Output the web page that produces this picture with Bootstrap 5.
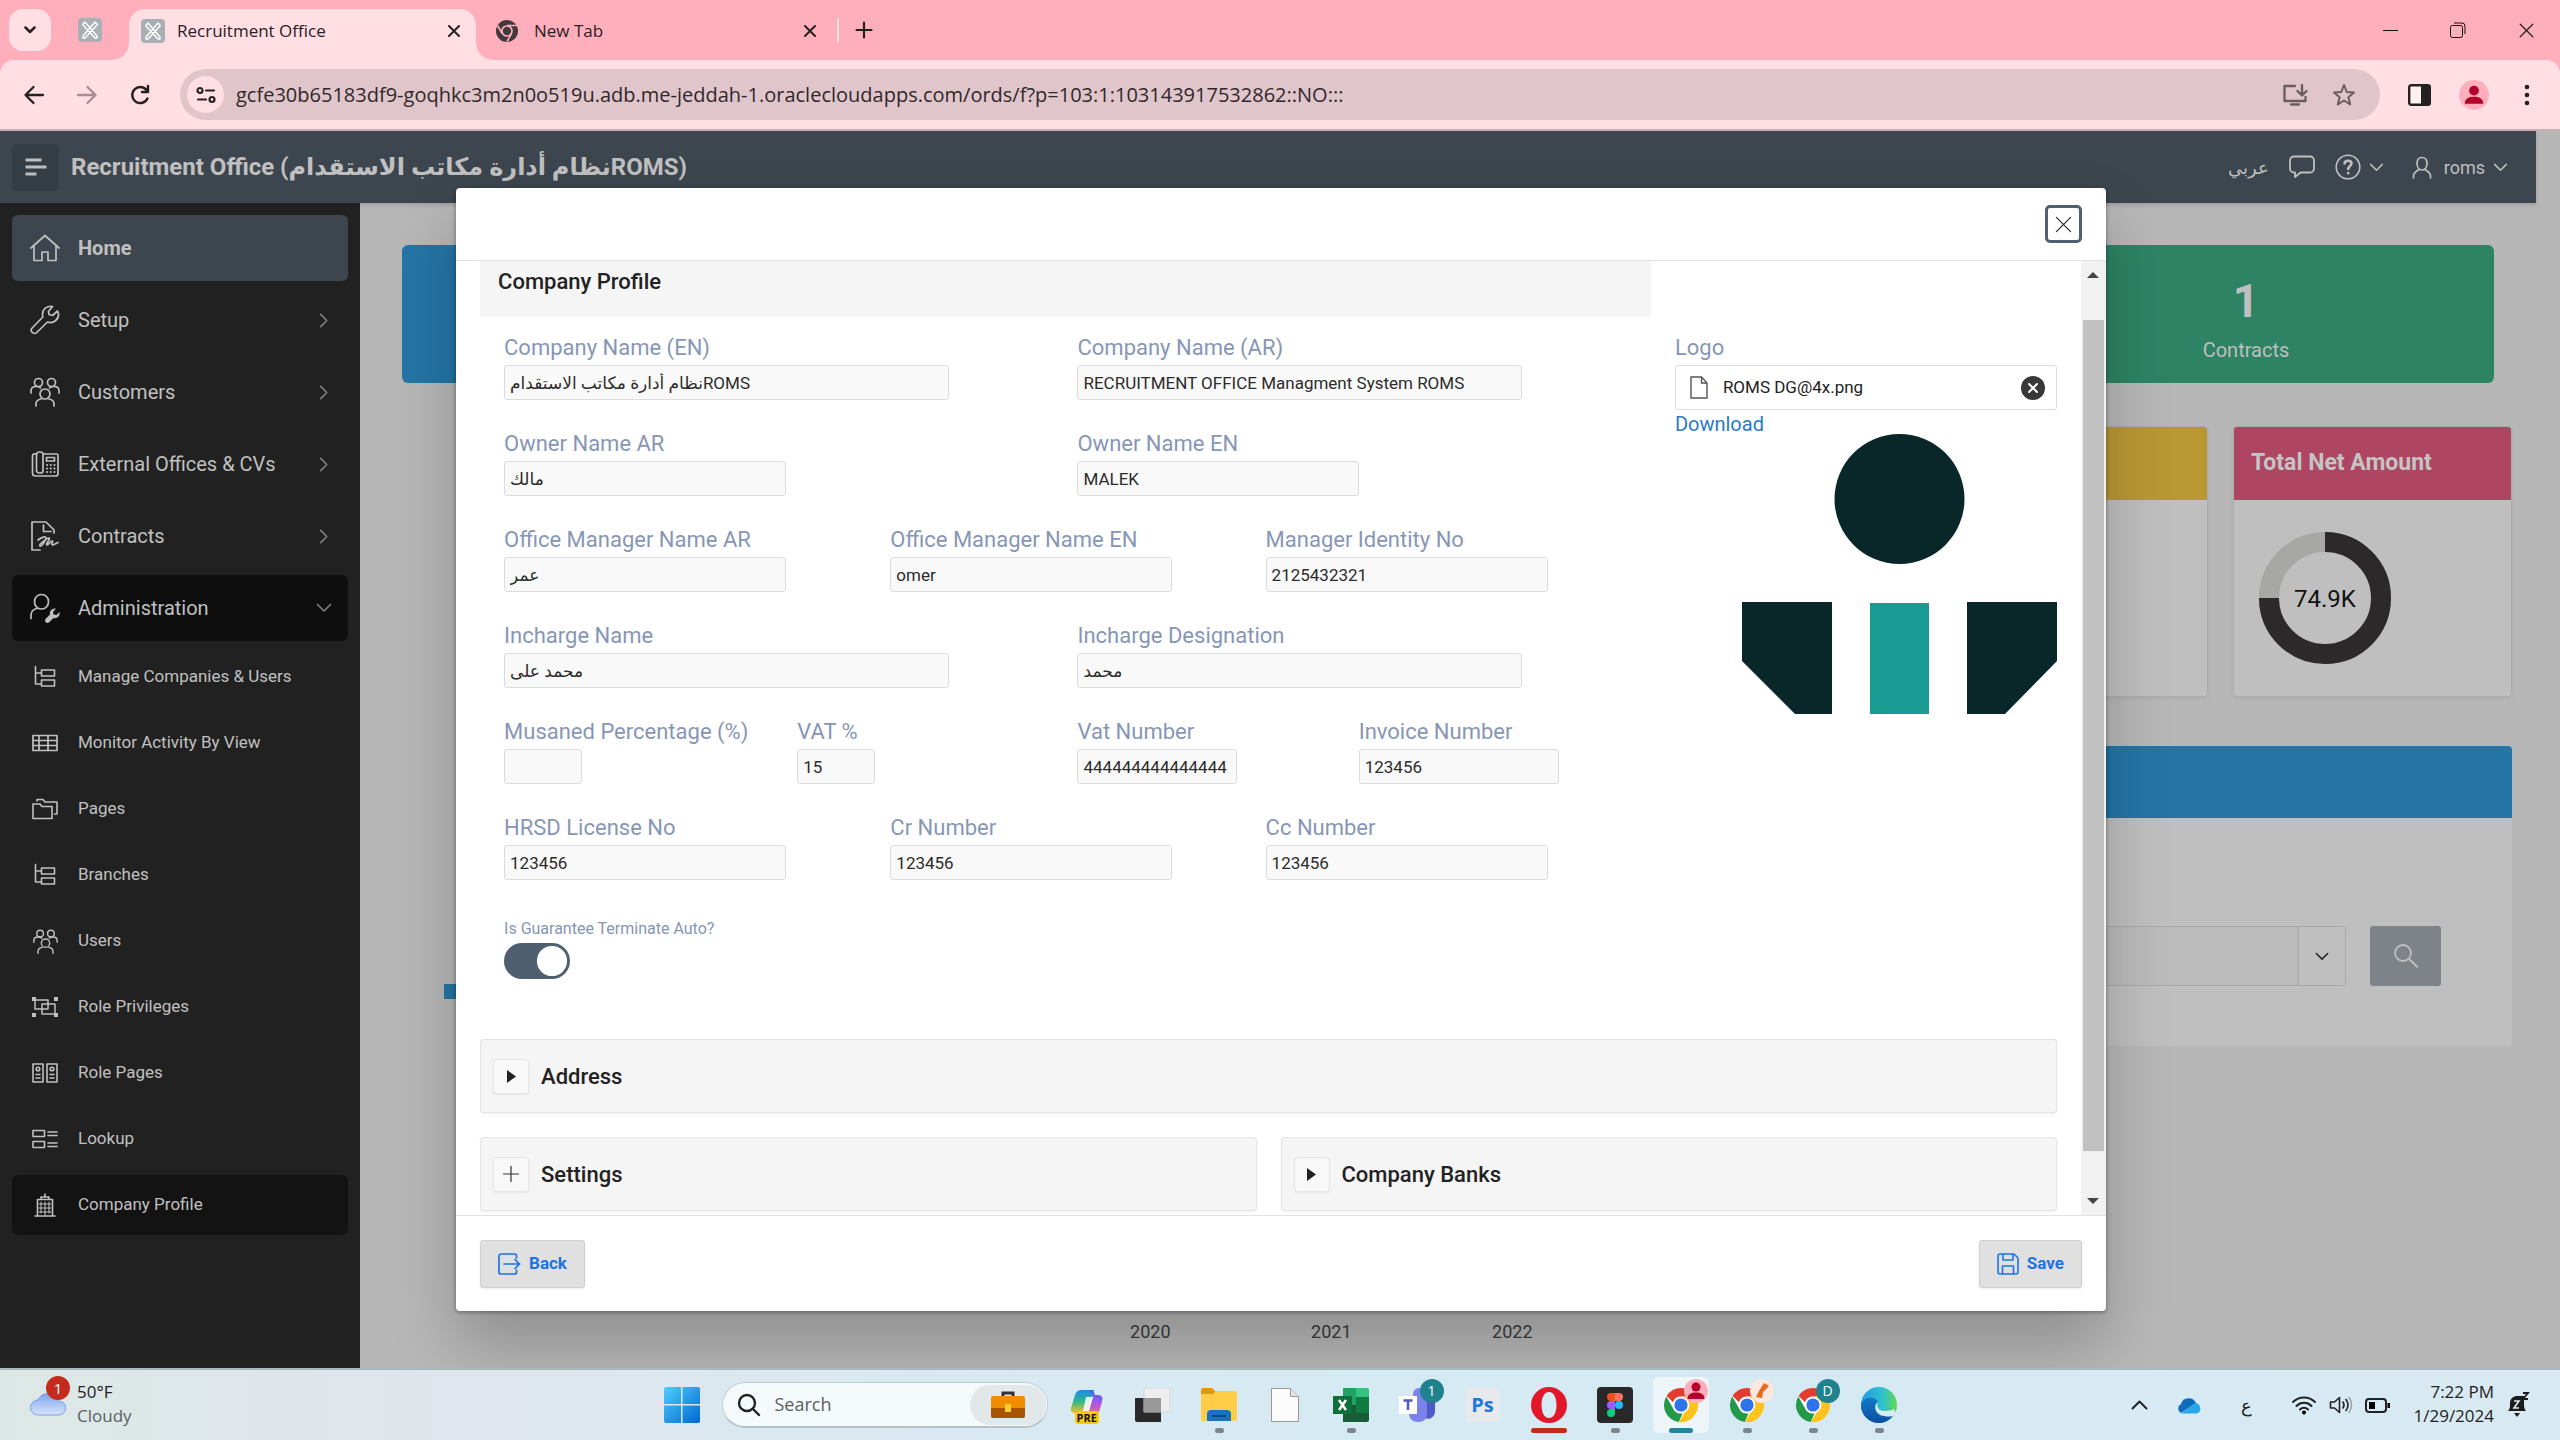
<!DOCTYPE html>
<html lang="en">
<head>
<meta charset="utf-8">
<meta name="viewport" content="width=device-width, initial-scale=1">
<title>Recruitment Office</title>
<link href="https://cdn.jsdelivr.net/npm/bootstrap@5.3.0/dist/css/bootstrap.min.css" rel="stylesheet">
<style>
body{height:100vh;min-height:1000px;overflow:hidden;font-family:Roboto,"DejaVu Sans",sans-serif;background:#b7b7b7;color:#222}
svg{display:block;flex:none}
button{border:0;background:none;padding:0;color:inherit}
.ln{fill:none;stroke:currentColor;stroke-linecap:round;stroke-linejoin:round}
.sys{font-family:"Open Sans",sans-serif}

/* browser window */
.tabstrip{background:#ffaebc;height:60px;padding-left:9px}
.tabsearch{width:42px;height:42px;border-radius:14px;background:#ffdee4}
.favi{width:24px;height:24px;border-radius:4px;background:#a9b0b4;color:#fff}
.pinned{margin-left:27px}
.tab-on,.tab-off{height:51px;padding-bottom:7px}
.tab-on{position:relative;width:347px;margin-left:27px;background:#ffdee4;border-radius:16px 16px 0 0}
.tab-on::before,.tab-on::after{content:"";position:absolute;bottom:0;width:16px;height:16px;background:radial-gradient(circle at 0 0,transparent 15px,#ffdee4 16px)}
.tab-on::before{left:-16px}
.tab-on::after{right:-16px;background:radial-gradient(circle at 100% 0,transparent 15px,#ffdee4 16px)}
.tab-off{width:352px}
.tabname{font-size:17px;color:#2b2024}
.tabsep{width:2px;height:24px;background:#ffdee4;margin-left:5px}
.winbtn{width:68px;height:60px}
.toolbar{height:71px;background:#ffdee4;border-radius:14px 14px 0 0;border-bottom:2px solid #c9aeb5;padding:0 23px;gap:31px}
.tools{gap:28px;margin-left:-3px}
.tbwrap{background:#ffaebc}
.urlbar{height:51px;border-radius:26px;background:#e0c5ca;padding:0 24px 0 7px;margin-left:-2px}
.urlbar input{font-size:20px;border:0;background:none;color:#30282b;padding:0 0 0 12px;outline:0}
.siteinfo{width:37px;height:37px;border-radius:50%;background:#ffdee4}
.avatar{width:30px;height:30px;border-radius:50%;background:#ffaebc}
.dots{width:20px}

/* application */
.app{position:relative;overflow:hidden;min-height:0}
.appbar{height:72px;margin-right:24px;padding:0 28px 0 12px;background:#3d464f;color:#bfbfbf;box-shadow:0 2px 4px rgba(0,0,0,.15);font-size:18px}
.menubtn{width:47px;height:47px;border-radius:4px;background:#353d45}
.apptitle{font-size:24px;font-weight:700;color:#c0c0c0;margin-left:12px}
.appact{gap:20px}
.side{width:360px;background:#212121;padding:12px;gap:6px;flex:none}
.side a{color:#c0c0c0;text-decoration:none;border-radius:6px;height:66px;font-size:20px;padding:0 16px 0 18px;gap:18px}
.side a.sub{height:60px;font-size:17px}
.side a .ic{width:30px;display:flex;justify-content:center}
.side a .end{color:#7e7e7e;margin-left:auto;width:16px}
.side a.cur{background:#3d464f;font-weight:700}
.side a.open{background:#0e0e0e}
.side a.here{background:#131313}
.dash{padding:42px 24px 0;margin-right:24px}
.kpis{display:grid;grid-template-columns:repeat(4,1fr);gap:36px;padding:0 18px}
.kpi{height:138px;border-radius:6px;text-align:center;color:#bfbfbf}
.kpi-blue{grid-column:1;background:#2475a6}
.kpi-green{grid-column:4;background:#2e8365;padding-top:24px}
.kpi-num{font-size:46px;line-height:64px;font-weight:700}
.kpi-cap{font-size:20px;line-height:34px}
.tiles{gap:25px;margin-top:43px}
.tile{width:279px;height:271px;border:1px solid #acacac;border-radius:4px;background:#bfbfbf;overflow:hidden;box-shadow:0 2px 4px rgba(0,0,0,.06)}
.tilehead{height:73px;padding:0 17px;font-size:23px;font-weight:700;color:#c4c4c4}
.lower{gap:24px;margin-top:49px}
.region{flex:888 1 0;height:300px;background:#bfbfbf;border-radius:4px;overflow:hidden}
.regionhead{height:72px;background:#2475a6}
.filters{gap:24px;padding:108px 71px 0 0}
.chart{flex:1216 1 0;height:600px;padding:238px 39px 0 60px}
.swatch{width:15px;height:15px;background:#2475a6}
.axis{font-size:18px;color:#3a3a3a;line-height:28px}
.axis span{width:181px;text-align:center}
.combo{height:60px;width:420px;border:1px solid #a8a8a8;background:#bbb;border-radius:3px}
.combo input{border:0;background:none}
.combo button{width:47px;border-left:1px solid #a8a8a8;background:#bfbfbf}
.findbtn{width:71px;height:60px;border-radius:3px;background:#7e8289;color:#c0c0c0}

/* dialog */
.overlay{position:absolute;inset:0;padding:57px 0 57px 2px}
.dlg{width:64.5%;background:#fff;border-radius:4px;box-shadow:0 34px 64px rgba(0,0,0,.22),0 1px 4px rgba(0,0,0,.4);overflow:hidden}
.dlghead{height:73px;border-bottom:1px solid #e2e2e2;padding:0 24px}
.dlgclose{width:37px;height:38px;border:3px solid #506070;border-radius:5px;color:#333}
.dlgbody{min-height:0;overflow:hidden}
.dlgfoot{height:96px;border-top:1px solid #e2e2e2;padding:0 24px}
.sect{font-size:22px;font-weight:500;color:#222}
.formcol{width:74.25%}
.logocol{width:25.75%;padding:71px 0 0 24px}
.formtitle{height:56px;padding:0 18px 15px;background:#f5f5f5}
.formrows{padding:15px 0 0 24px}
.formrow{display:grid;margin-bottom:28px}
.g2{grid-template-columns:1fr 1fr}
.g3{grid-template-columns:386fr 375fr 385fr}
.g4{grid-template-columns:293fr 280fr 281fr 292fr}
.flabel{display:block;font-size:22px;line-height:31px;padding-bottom:2px;color:#8796b6;white-space:nowrap}
.fbox{display:block;height:35px;border:1px solid #dcdcdc;border-radius:3px;background:#f9f9f9;font-size:17px;color:#2c2c2c;padding:0 5px}
.w-xs{width:78px}.w-s{width:160px}.w-m{width:200px}.w-l{width:282px}.w-xl{width:445px}
.switchrow{padding-top:9px}
.tlabel{display:block;font-size:16px;line-height:24px;color:#8796b6}
.tgl.form-check-input{width:66px;height:36px;margin:2px 0 0;float:none;border:0;background-color:#4f5f6f;
 background-image:url("data:image/svg+xml,%3Csvg xmlns='http://www.w3.org/2000/svg' viewBox='-4 -4 8 8'%3E%3Ccircle r='3.35' fill='%23fff'/%3E%3C/svg%3E")}
.filebox{height:45px;border:1px solid #dedede;border-radius:3px;padding:0 11px 0 14px;font-size:17px;color:#222;gap:15px}
.dl{display:block;font-size:20px;line-height:19px;margin-top:5px;color:#2a7ac6;text-decoration:none}
.acc{height:74px;border:1px solid #e4e4e4;border-radius:3px;background:#f5f5f5;padding:0 12px;gap:12px;box-shadow:0 2px 3px rgba(0,0,0,.04)}
.acc-first{margin-top:60px}
.accbtn{width:36px;height:35px;border:1px solid #e6e6e6;border-radius:3px;background:#f8f8f8;box-shadow:0 1px 2px rgba(0,0,0,.06)}
.sbar{width:25px;background:#f1f1f1;padding:11px 2px}
.thumb{background:#c1c1c1;height:831px;flex-shrink:1;margin-top:42px}
.dbtn{height:48px;border:1px solid #cfcfcf;border-radius:3px;background:#e0e0e0;color:#1a73e8;font-size:17px;font-weight:700;padding:0 17px;gap:8px;box-shadow:0 1px 3px rgba(0,0,0,.08)}

/* taskbar */
.taskbar{position:relative;height:72px;border-top:2px solid #a9b9c0;background:linear-gradient(90deg,#dce8e6,#e0e5ec 16%,#dbe8f0 30%,#d5eaf3 55%,#d8e9f2);padding:0 30px}
.tbside{flex:1 1 0;min-width:0}
.weather{font-size:17px;line-height:24px;color:#222;gap:10px}
.weather,.clock{padding-bottom:2px}
.wbadge{position:absolute;left:46px;top:6px;width:24px;height:24px;border-radius:50%;background:#c42b1c;color:#fff;font-size:15px;line-height:24px;text-align:center}
.search{width:326px;height:46px;border-radius:23px;background:#f4f9fb;border:1px solid #bdd0d8;border-bottom:2px solid #b3c3ca;padding:0 1px 0 14px;margin-right:6px}
.search input{border:0;background:none;font-size:18px;width:180px;padding:0 0 0 14px;outline:0}
.search input::placeholder{color:#5a5f62;opacity:1}
.search .case{width:76px;height:40px;border-radius:20px;background:#e2e7e9}
.apps button{position:relative;width:56px;height:56px;border-radius:6px;margin:0 5px;display:flex;align-items:center;justify-content:center}
.apps button.win{margin-right:12px}
.apps .on{background:#eef5f9}
.dot::after{content:"";position:absolute;bottom:0;left:24px;width:9px;height:5px;border-radius:3px;background:#7c868b}
.on.dot::after{left:16px;width:24px;background:#23849b}
.dot.red::after{left:10px;width:36px;background:#c42b1c}
.bdg{position:absolute;right:1px;top:2px;width:24px;height:24px;border-radius:50%;background:#21828f;color:#fff;font-size:14px;line-height:24px;text-align:center}
.bdg.tr{background:#ffaebc}
.bdg.or{background:#fbe6e0}
.ps{width:34px;height:34px;border-radius:5px;background:#e7e9ec;color:#1b7ae0;font-size:20px;font-weight:700;line-height:33px;text-align:center}
.pre{position:absolute;bottom:9px;left:16px;background:#ffc810;color:#111;font-size:11px;font-weight:700;line-height:13px;border-radius:3px;padding:0 2px}
.tray{gap:12px}
.tray .far{margin-right:27px}
.lang{font-size:18px}
.clock{font-size:17px;line-height:24px;text-align:right;color:#222;margin-left:10px}
</style>
</head>
<body class="d-flex flex-column">
<svg width="0" height="0" class="position-absolute" aria-hidden="true">
<defs>
<symbol id="x" viewBox="0 0 12 12"><path class="ln" d="M1 1l10 10M11 1L1 11"/></symbol>
<symbol id="cr" viewBox="0 0 10 16"><path class="ln" stroke-width="1.8" d="M1.500 1.500L8 8l-6.500 6.500"/></symbol>
<symbol id="cd" viewBox="0 0 16 10"><path class="ln" stroke-width="1.700" d="M1.500 1.500L8 8l6.500-6.500"/></symbol>
<symbol id="fav" viewBox="0 0 24 24"><path class="ln" stroke-width="1.400" d="M5 6l2-2 12 14v2h-2L5 7zM19 6l-2-2L5 18v2h2L19 7z"/></symbol>
<symbol id="people" viewBox="0 0 30 30"><g class="ln" stroke-width="1.700"><circle cx="8.500" cy="5.500" r="4"/><circle cx="21.500" cy="5.500" r="4"/><circle cx="15" cy="17" r="5"/><path d="M1 16v-2c0-3 2-4.500 5-4.500 2 0 3.500.5 4.500 1.500M29 16v-2c0-3-2-4.500-5-4.500-2 0-3.500.5-4.500 1.500M6 29v-2c0-3 2-4.500 5-5M24 29v-2c0-3-2-4.500-5-5"/></g></symbol>
<symbol id="tree" viewBox="0 0 24 24"><path class="ln" stroke-width="1.600" d="M2.500 1.500v17.500h6M2.500 8h6M8.500 5h13v6h-13zM8.500 15h13v6h-13z"/></symbol>
<symbol id="chrome" viewBox="0 0 36 36"><circle cx="18" cy="18" r="17" fill="#fff"/><path fill="#e33b2e" d="M18 1a17 17 0 0 1 14.700 8.500H18a8.500 8.500 0 0 0-8 5.700L3.600 9A17 17 0 0 1 18 1z"/><path fill="#229a4a" d="M3.300 9.500l7.300 12.700a8.500 8.500 0 0 0 9 4.100L15.800 35A17 17 0 0 1 3.300 9.500z"/><path fill="#fcc31e" d="M32.700 9.500A17 17 0 0 1 16 35l7.400-12.700a8.500 8.500 0 0 0-.4-9.400l-4-3.400z"/><circle cx="18" cy="18" r="8.300" fill="#fff"/><circle cx="18" cy="18" r="6.600" fill="#2f73ea"/></symbol>
<symbol id="person" viewBox="0 0 24 24"><circle cx="12" cy="8" r="4.500"/><path d="M3.500 20c0-5 4-6.500 8.500-6.500s8.500 1.500 8.500 6.500z"/></symbol>
</defs>
</svg>

<!-- browser tabs -->
<div class="tabstrip d-flex align-items-center sys">
  <button class="tabsearch d-flex align-items-center justify-content-center" aria-label="Search tabs"><svg width="12" height="8"><path class="ln" stroke-width="2.500" d="M1.500 1.500L6 6l4.500-4.500"/></svg></button>
  <button class="favi pinned" aria-label="Pinned tab"><svg width="24" height="24"><use href="#fav"/></svg></button>
  <div class="tab-on d-flex align-items-center align-self-end ps-2">
    <span class="favi ms-1"><svg width="24" height="24"><use href="#fav"/></svg></span>
    <span class="tabname flex-grow-1 ps-2 ms-1">Recruitment Office</span>
    <button class="me-3" aria-label="Close tab"><svg width="12" height="12" stroke-width="2"><use href="#x"/></svg></button>
  </div>
  <div class="tab-off d-flex align-items-center align-self-end ps-3 ms-1">
    <svg class="me-2" width="22" height="22" viewBox="0 0 22 22"><circle cx="11" cy="11" r="11" fill="#43383c"/><circle cx="11" cy="11" r="5" fill="#43383c" stroke="#ffaebc" stroke-width="1.700"/><path d="M11 5.500h10M6.200 13.500L1.500 5.500M15.600 13.500L11 21.500" stroke="#ffaebc" stroke-width="1.600"/></svg>
    <span class="tabname flex-grow-1 ps-2">New Tab</span>
    <button class="me-3" aria-label="Close tab"><svg width="12" height="12" stroke-width="2"><use href="#x"/></svg></button>
  </div>
  <span class="tabsep"></span>
  <button class="ms-3" aria-label="New tab"><svg width="18" height="18"><path class="ln" stroke-width="2.200" d="M9 1.500v15M1.500 9h15"/></svg></button>
  <div class="ms-auto d-flex">
    <button class="winbtn" aria-label="Minimize"><svg class="mx-auto" width="15" height="15"><path stroke="#111" d="M0 7.500h15"/></svg></button>
    <button class="winbtn" aria-label="Restore"><svg class="mx-auto" width="16" height="16"><rect x=".5" y="3.500" width="12" height="12" rx="2" fill="none" stroke="#111"/><path fill="none" stroke="#111" d="M4 1h8a3 3 0 0 1 3 3v8"/></svg></button>
    <button class="winbtn" aria-label="Close"><svg class="mx-auto" width="15" height="15" stroke-width="1"><use href="#x"/></svg></button>
  </div>
</div>

<!-- address bar -->
<div class="tbwrap sys">
<div class="toolbar d-flex align-items-center">
  <button aria-label="Back"><svg width="22" height="20"><path class="ln" stroke-width="2.300" d="M20 10H3M10.500 2L2.500 10l8 8"/></svg></button>
  <button aria-label="Forward" style="color:#a58d92"><svg width="22" height="20"><path class="ln" stroke-width="2.300" d="M2 10h17M11.500 2l8 8-8 8"/></svg></button>
  <button aria-label="Reload"><svg width="22" height="22"><path class="ln" stroke-width="2.400" d="M18.500 14.500A8 8 0 1 1 17.500 6M19 2v6h-6"/></svg></button>
  <div class="urlbar flex-grow-1 d-flex align-items-center">
    <button class="siteinfo d-flex align-items-center justify-content-center" aria-label="Site information"><svg width="20" height="18"><g class="ln" stroke-width="2.200"><circle cx="4" cy="4.500" r="2.500"/><path d="M10 4.500h8M2 13.500h8"/><circle cx="16" cy="13.500" r="2.500"/></g></svg></button>
    <input class="flex-grow-1" aria-label="Address" value="gcfe30b65183df9-goqhkc3m2n0o519u.adb.me-jeddah-1.oraclecloudapps.com/ords/f?p=103:1:103143917532862::NO:::">
    <button class="me-4" aria-label="Install app" style="color:#6b5c60"><svg width="26" height="22"><path class="ln" stroke-width="2.300" d="M13 2H2.500v15h21v-4M9 20.500h8M20 1v9M15.500 7l4.500 4.500L24.500 7"/></svg></button>
    <button aria-label="Bookmark" style="color:#6b5c60"><svg width="24" height="24"><path class="ln" stroke-width="2" d="M12 2l2.800 7 7.200.5-5.600 4.700 1.800 7.300-6.200-4-6.200 4 1.800-7.300L2 9.500 9.200 9z"/></svg></button>
  </div>
  <div class="tools d-flex align-items-center">
    <button aria-label="Side panel"><svg width="23" height="22"><rect x="1.200" y="1.200" width="20.600" height="19.600" rx="2" fill="#fff0f2" stroke="#222" stroke-width="2.400"/><path fill="#222" d="M13 1h9v20h-9z"/></svg></button>
    <button class="avatar d-flex align-items-center justify-content-center" aria-label="Profile"><svg width="26" height="26" fill="#b4002a"><use href="#person"/></svg></button>
    <button aria-label="Menu" class="dots"><svg class="mx-auto" width="6" height="22" fill="#222"><circle cx="3" cy="3" r="2.300"/><circle cx="3" cy="11" r="2.300"/><circle cx="3" cy="19" r="2.300"/></svg></button>
  </div>
</div>
</div>

<!-- application -->
<div class="app flex-grow-1 d-flex flex-column">
  <header class="appbar d-flex align-items-center">
    <button class="menubtn d-flex align-items-center justify-content-center" aria-label="Navigation"><svg width="24" height="18"><path class="ln" stroke-width="3" style="stroke-linecap:butt" d="M1.500 2h16M1.500 9h21M1.500 16h11"/></svg></button>
    <div class="apptitle">Recruitment Office (نظام أدارة مكاتب الاستقدامROMS)</div>
    <div class="appact d-flex align-items-center ms-auto">
      <a class="text-reset text-decoration-none" href="#">عربي</a>
      <button aria-label="Messages"><svg width="26" height="24"><path class="ln" stroke-width="1.800" d="M5 1.500h16a4 4 0 0 1 4 4v8a4 4 0 0 1-4 4h-9.500L6 22v-4.500H5a4 4 0 0 1-4-4v-8a4 4 0 0 1 4-4z"/></svg></button>
      <button class="d-flex align-items-center gap-2" aria-label="Help"><svg width="26" height="26"><circle class="ln" cx="13" cy="13" r="11.800" stroke-width="1.600"/><path class="ln" stroke-width="2.600" d="M9.500 9.500c.5-4 7-3.500 7 0 0 2.500-3.300 2.500-3.300 5.500M13.200 19v.3"/></svg><svg width="15" height="9"><use href="#cd"/></svg></button>
      <button class="d-flex align-items-center gap-2 ms-2"><svg class="me-1" width="20" height="23"><g class="ln" stroke-width="1.700"><path d="M10 1.500c3.500 0 5 2.500 5 6s-2 6.500-5 6.500-5-3-5-6.500 1.500-6 5-6zM1.500 22v-2c0-3 2-4.500 5.500-6.500M18.500 22v-2c0-3-2-4.500-5.500-6.500"/></g></svg>roms<svg width="15" height="9"><use href="#cd"/></svg></button>
    </div>
  </header>

  <div class="d-flex flex-grow-1 overflow-hidden">
    <nav class="side d-flex flex-column">
      <a class="cur d-flex align-items-center" href="#"><span class="ic"><svg width="30" height="28"><path class="ln" stroke-width="1.700" d="M1 14L15 1.500 29 14M4 12v14.500h8V18h6v8.500h8V12"/></svg></span>Home</a>
      <a class="d-flex align-items-center" href="#"><span class="ic"><svg width="30" height="30"><path class="ln" stroke-width="1.700" d="M22.500 1.500c-5-1-10 2-10 8 0 1 .2 2 .3 2.500L1.700 23.500c-1.500 2.500 1 6 4.500 4.500L17.500 17c6 2 11.500-2.500 11-8.500l-1-2.500-5 4.500-3.500-1-.5-3z"/></svg></span>Setup<svg class="end" height="15"><use href="#cr"/></svg></a>
      <a class="d-flex align-items-center" href="#"><span class="ic"><svg width="30" height="30"><use href="#people"/></svg></span>Customers<svg class="end" height="15"><use href="#cr"/></svg></a>
      <a class="d-flex align-items-center" href="#"><span class="ic"><svg width="28" height="26"><g class="ln" stroke-width="1.700"><path d="M5.500 3C3 2.500 1.500 3 1.500 5v17c0 2 1 3 3 3h20c1.500 0 2.500-1 2.500-2.500V4.500C27 3.500 26.500 3 25.500 3H12"/><rect x="5.500" y="1" width="6.500" height="21" rx="2.500"/><path d="M15.500 6.500h8V10h-8z"/><path stroke-width="2" stroke-dasharray=".1 3.600" d="M16 14h9M16 17.500h9M16 21h9"/></g></svg></span>External Offices &amp; CVs<svg class="end" height="15"><use href="#cr"/></svg></a>
      <a class="d-flex align-items-center" href="#"><span class="ic"><svg width="30" height="32"><g class="ln" stroke-width="1.700"><path d="M10 30H2V2h14l8 8v3M13.500 5v6.500H21"/><path d="M8 20c4-3 8-4 8-2s-4 9-6 8 7-8 9-8-4 7-2 7 3-4 5-4-2 4 1 4l5-2.500"/></g></svg></span>Contracts<svg class="end" height="15"><use href="#cr"/></svg></a>
      <a class="open d-flex align-items-center" href="#"><span class="ic"><svg width="30" height="30"><path class="ln" stroke-width="1.700" d="M11.500 1.500c4 0 7 3 7 7s-2.500 7.500-7 7.500-7-3.500-7-7.500 3-7 7-7zM7 15.500c-4 1-6 3-6 6.500v3.500"/><path fill="currentColor" d="M26 15.500l-3 3.500.5 2.500 3 .5 3-3c1 4-2.500 7-6 6l-4.500 4.500c-2.500 1.500-5-1-3.500-3.500l4.500-4.500c-1-3.500 2.500-6.500 6-6z"/></svg></span>Administration<svg class="end" height="10"><use href="#cd"/></svg></a>
      <a class="sub d-flex align-items-center" href="#"><span class="ic"><svg width="24" height="24"><use href="#tree"/></svg></span>Manage Companies &amp; Users</a>
      <a class="sub d-flex align-items-center" href="#"><span class="ic"><svg width="26" height="18"><path class="ln" stroke-width="1.700" d="M1 1.500h24v15H1zM1 6.500h24M1 11.500h24M7 1.500v15M16 1.500v15"/></svg></span>Monitor Activity By View</a>
      <a class="sub d-flex align-items-center" href="#"><span class="ic"><svg width="26" height="22"><path class="ln" stroke-width="1.600" d="M1 20.500V6h7l2 2.500h10v12zM5 3V1.500h6L13 4h12v12h-2.500"/></svg></span>Pages</a>
      <a class="sub d-flex align-items-center" href="#"><span class="ic"><svg width="24" height="24"><use href="#tree"/></svg></span>Branches</a>
      <a class="sub d-flex align-items-center" href="#"><span class="ic"><svg width="25" height="25"><use href="#people"/></svg></span>Users</a>
      <a class="sub d-flex align-items-center" href="#"><span class="ic"><svg width="26" height="20"><path class="ln" stroke-width="1.500" d="M3 3h13v9H3zM10 7h13v10H10z"/><path fill="currentColor" d="M0 0h4v4H0zM22 0h4v4h-4zM0 16h4v4H0zM22 16h4v4h-4z"/></svg></span>Role Privileges</a>
      <a class="sub d-flex align-items-center" href="#"><span class="ic"><svg width="26" height="20"><path class="ln" stroke-width="1.600" d="M1 1h10v18H1zM15 1h10v18H15zM4 11.500h4M4 15h4M18 11.500h4M18 15h4"/><circle class="ln" stroke-width="1.600" cx="6" cy="6" r="1.800"/><circle class="ln" stroke-width="1.600" cx="20" cy="6" r="1.800"/></svg></span>Role Pages</a>
      <a class="sub d-flex align-items-center" href="#"><span class="ic"><svg width="26" height="20"><path class="ln" stroke-width="1.600" d="M1 1.500h11.500v6H1zM1 12.500h11.500v6H1zM16 3h9M16 6.500h9M16 14h9M16 17.500h9"/></svg></span>Lookup</a>
      <a class="sub here d-flex align-items-center" href="#"><span class="ic"><svg width="22" height="24"><path class="ln" stroke-width="1.600" d="M1 23h20M3.500 23V6.500h15V23M7 6.500V4h8v2.500M11 4V1"/><path class="ln" stroke-width="1.100" d="M7 9v11M11 9v13M15 9v11M5 11h12M5 15h12M5 19h12"/></svg></span>Company Profile</a>
    </nav>

    <main class="dash flex-grow-1">
      <div class="kpis">
        <div class="kpi kpi-blue"></div>
        <div class="kpi kpi-green"><div class="kpi-num">1</div><div class="kpi-cap">Contracts</div></div>
      </div>
      <div class="tiles d-flex justify-content-end">
        <div class="tile"><div class="tilehead" style="background:#b99834"></div></div>
        <div class="tile">
          <div class="tilehead d-flex align-items-center" style="background:#ae4562">Total Net Amount</div>
          <svg width="180" height="198"><circle cx="91" cy="98" r="56" fill="none" stroke="#a7a7a5" stroke-width="20"/><circle cx="91" cy="98" r="56" fill="none" stroke="#2b292a" stroke-width="20" pathLength="100" stroke-dasharray="75 25" transform="rotate(-90 91 98)"/><text x="91" y="107" text-anchor="middle" font-size="24" fill="#111" font-family="Roboto, sans-serif">74.9K</text></svg>
        </div>
      </div>
      <div class="lower d-flex">
        <div class="chart d-flex flex-column"><div class="swatch"></div><div class="axis d-flex justify-content-end mt-auto"><span>2020</span><span>2021</span><span>2022</span></div></div>
        <div class="region">
          <div class="regionhead"></div>
          <div class="filters d-flex justify-content-end">
            <div class="combo d-flex"><input class="flex-grow-1" aria-label="Filter"><button aria-label="Open list"><svg class="mx-auto" width="14" height="9" style="color:#222"><use href="#cd"/></svg></button></div>
            <button class="findbtn" aria-label="Search"><svg class="mx-auto" width="26" height="26"><g class="ln" stroke-width="1.800"><circle cx="10" cy="10" r="8"/><path d="M16 16l8.500 8"/></g></svg></button>
          </div>
        </div>
      </div>
    </main>
  </div>

  <!-- company profile dialog -->
  <div class="overlay d-flex justify-content-center">
    <form class="dlg d-flex flex-column" role="dialog" aria-label="Company Profile">
      <div class="dlghead d-flex align-items-center justify-content-end">
        <button type="button" class="dlgclose d-flex align-items-center justify-content-center" aria-label="Close"><svg width="17" height="17" stroke-width=".9"><use href="#x"/></svg></button>
      </div>
      <div class="dlgbody d-flex flex-grow-1">
        <div class="flex-grow-1 px-4">
          <div class="d-flex">
            <div class="formcol">
              <div class="formtitle d-flex align-items-center sect">Company Profile</div>
              <div class="formrows">
                <div class="formrow g2">
                  <div><label class="flabel" for="f1">Company Name (EN)</label><input class="fbox w-xl" id="f1" value="نظام أدارة مكاتب الاستقدامROMS"></div>
                  <div><label class="flabel" for="f2">Company Name (AR)</label><input class="fbox w-xl" id="f2" value="RECRUITMENT OFFICE Managment System ROMS"></div>
                </div>
                <div class="formrow g2">
                  <div><label class="flabel" for="f3">Owner Name AR</label><input class="fbox w-l" id="f3" value="مالك"></div>
                  <div><label class="flabel" for="f4">Owner Name EN</label><input class="fbox w-l" id="f4" value="MALEK"></div>
                </div>
                <div class="formrow g3">
                  <div><label class="flabel" for="f5">Office Manager Name AR</label><input class="fbox w-l" id="f5" value="عمر"></div>
                  <div><label class="flabel" for="f6">Office Manager Name EN</label><input class="fbox w-l" id="f6" value="omer"></div>
                  <div><label class="flabel" for="f7">Manager Identity No</label><input class="fbox w-l" id="f7" value="2125432321"></div>
                </div>
                <div class="formrow g2">
                  <div><label class="flabel" for="f8">Incharge Name</label><input class="fbox w-xl" id="f8" value="محمد على"></div>
                  <div><label class="flabel" for="f9">Incharge Designation</label><input class="fbox w-xl" id="f9" value="محمد"></div>
                </div>
                <div class="formrow g4">
                  <div><label class="flabel" for="f10">Musaned Percentage (%)</label><input class="fbox w-xs" id="f10" value=""></div>
                  <div><label class="flabel" for="f11">VAT %</label><input class="fbox w-xs" id="f11" value="15"></div>
                  <div><label class="flabel" for="f12">Vat Number</label><input class="fbox w-s" id="f12" value="444444444444444"></div>
                  <div><label class="flabel" for="f13">Invoice Number</label><input class="fbox w-m" id="f13" value="123456"></div>
                </div>
                <div class="formrow g3">
                  <div><label class="flabel" for="f14">HRSD License No</label><input class="fbox w-l" id="f14" value="123456"></div>
                  <div><label class="flabel" for="f15">Cr Number</label><input class="fbox w-l" id="f15" value="123456"></div>
                  <div><label class="flabel" for="f16">Cc Number</label><input class="fbox w-l" id="f16" value="123456"></div>
                </div>
                <div class="switchrow">
                  <label class="tlabel" for="f17">Is Guarantee Terminate Auto?</label>
                  <div class="form-switch p-0"><input class="form-check-input tgl d-block" type="checkbox" role="switch" id="f17" checked></div>
                </div>
              </div>
            </div>
            <div class="logocol">
              <label class="flabel" for="logo">Logo</label>
              <div class="filebox d-flex align-items-center">
                <svg width="18" height="23"><path fill="none" stroke="#555" stroke-width="1.400" d="M1 1h10.500L17 7v15H1zM11.500 1v6H17"/></svg>
                <span class="flex-grow-1">ROMS DG@4x.png</span>
                <button type="button" id="logo" aria-label="Remove file"><svg width="24" height="24"><circle cx="12" cy="12" r="12" fill="#383838"/><path class="ln" style="stroke:#fff" stroke-width="2" d="M8 8l8 8M16 8l-8 8"/></svg></button>
              </div>
              <a class="dl" href="#">Download</a>
              <svg class="ms-auto" width="315" height="281" viewBox="0 0 315 281" role="img" aria-label="Company logo"><circle cx="157.500" cy="65" r="65" fill="#092729"/><path fill="#092729" d="M0 168h90v112H53L0 227zM225 168h90v59l-52 53h-38z"/><path fill="#1a9b93" d="M128 169h59v111h-59z"/></svg>
            </div>
          </div>
          <div class="acc acc-first d-flex align-items-center sect"><button type="button" class="accbtn d-flex align-items-center justify-content-center" aria-label="Expand Address"><svg width="9" height="13"><path fill="#222" d="M0 0l9 6.500L0 13z"/></svg></button>Address</div>
          <div class="d-flex gap-4 mt-4">
            <div class="acc d-flex align-items-center sect flex-fill w-50"><button type="button" class="accbtn d-flex align-items-center justify-content-center" aria-label="Expand Settings"><svg width="16" height="16"><path stroke="#333" stroke-width="1.200" d="M8 0v16M0 8h16"/></svg></button>Settings</div>
            <div class="acc d-flex align-items-center sect flex-fill w-50"><button type="button" class="accbtn d-flex align-items-center justify-content-center" aria-label="Expand Company Banks"><svg width="9" height="13"><path fill="#222" d="M0 0l9 6.500L0 13z"/></svg></button>Company Banks</div>
          </div>
        </div>
        <div class="sbar d-flex flex-column align-items-stretch">
          <svg class="mx-auto" width="12" height="6"><path fill="#444" d="M0 6l6-6 6 6z"/></svg>
          <div class="thumb"></div>
          <svg class="mx-auto mt-auto" width="12" height="6"><path fill="#444" d="M0 0l6 6 6-6z"/></svg>
        </div>
      </div>
      <div class="dlgfoot d-flex align-items-center justify-content-between">
        <button type="button" class="dbtn d-flex align-items-center"><svg width="23" height="22"><path class="ln" stroke-width="1.700" d="M18.500 5V3a2 2 0 0 0-2-2H3a2 2 0 0 0-2 2v16a2 2 0 0 0 2 2h13.500a2 2 0 0 0 2-2v-2M6 11h15.500M17 6.500l4.500 4.500-4.500 4.500"/></svg>Back</button>
        <button type="button" class="dbtn d-flex align-items-center"><svg width="22" height="22"><path class="ln" stroke-width="1.600" d="M3 1h14l4 4v14a2 2 0 0 1-2 2H3a2 2 0 0 1-2-2V3a2 2 0 0 1 2-2zM6 1v6h10V1M5.500 21v-8h11v8"/></svg>Save</button>
      </div>
    </form>
  </div>
</div>

<!-- taskbar -->
<div class="taskbar d-flex align-items-center sys">
  <div class="weather tbside d-flex align-items-center">
    <svg width="37" height="34"><defs><linearGradient id="cl" y2="1" x2="0"><stop stop-color="#7aa5ee"/><stop offset="1" stop-color="#d8e4fa"/></linearGradient></defs><path fill="url(#cl)" stroke="#7f9fe6" d="M8 28a7 7 0 0 1 0-15 11 11 0 0 1 20.500 1A7 7 0 0 1 29 28z"/></svg>
    <div>50°F<br><span style="color:#5b6164">Cloudy</span></div>
    <span class="wbadge">1</span>
  </div>
  <div class="apps d-flex align-items-center">
    <button class="win" aria-label="Start"><svg width="36" height="36"><defs><linearGradient id="wn" x2="1" y2="1"><stop stop-color="#4fcfff"/><stop offset="1" stop-color="#0067cf"/></linearGradient></defs><path fill="url(#wn)" d="M0 2q0-2 2-2h15v17H0zM18.500 0H34q2 0 2 2v15H18.500zM0 18.500h17V36H2q-2 0-2-2zM18.500 18.500H36V34q0 2-2 2H18.500z"/></svg></button>
    <div class="search d-flex align-items-center">
      <svg width="24" height="24"><g class="ln" stroke-width="2.400"><circle cx="10" cy="10" r="8"/><path d="M16 16l6 6"/></g></svg>
      <input type="search" class="flex-grow-1" placeholder="Search" aria-label="Search">
      <span class="case d-flex align-items-center justify-content-center"><svg width="34" height="28"><path fill="none" stroke="#333" stroke-width="3" d="M12 7V2h10v5"/><rect y="5" width="34" height="22" rx="2" fill="#f08d00"/><path fill="#a85300" d="M0 17h34v8q0 2-2 2H2q-2 0-2-2z"/><path fill="#ffd02a" d="M14 13h6v8h-6z"/></svg></span>
    </div>
    <button aria-label="Copilot"><svg width="36" height="36"><defs><linearGradient id="c1" x2="0" y2="1"><stop stop-color="#1b8af0"/><stop offset=".5" stop-color="#2fb98a"/><stop offset="1" stop-color="#f0c02a"/></linearGradient><linearGradient id="c2" x2="0" y2="1"><stop stop-color="#3568ea"/><stop offset=".5" stop-color="#b454e8"/><stop offset="1" stop-color="#f4725c"/></linearGradient></defs><path fill="url(#c1)" d="M12 3h13l-6 20q-1 3-5 3H6q-5 0-4-5l4-13q2-5 6-5z"/><path fill="url(#c2)" d="M20 3q5 0 6 5h3q6 0 4 7l-3 10q-2 6-6 6H14q4-1 5-5l5-16z"/><path fill="#fff" opacity=".85" d="M17 10h7l-4 14h-6z"/></svg><span class="pre">PRE</span></button>
    <button aria-label="Task view"><svg width="36" height="34"><path fill="#292929" d="M0 10h26v24H2q-2 0-2-2z"/><path fill="#eee" stroke="#d4d4d4" d="M9 2q0-2 2-2h22q2 0 2 2v22H9z"/><path fill="#999" d="M9 10h17v14H9z"/></svg></button>
    <button class="dot" aria-label="File Explorer"><svg width="36" height="34"><path fill="#dc9a0c" d="M0 2q0-2 2-2h9l4 4h12v8H0z"/><path fill="#ffcd48" d="M0 6h12l3-3h19q2 0 2 2v26q0 2-2 2H2q-2 0-2-2z"/><path fill="#1673bf" d="M6 33V26q0-4 4-4h16q4 0 4 4v7z"/><path stroke="#0b4a80" stroke-width="2" d="M11 28h14"/></svg></button>
    <button aria-label="Document"><svg width="28" height="34"><path fill="#fcfcfc" stroke="#999" d="M.5.500h19l8 8v25H.5z"/><path fill="#e6e6e6" stroke="#999" d="M19.500.500v8h8"/></svg></button>
    <button class="dot" aria-label="Excel"><svg width="36" height="34"><path fill="#21a366" d="M10 0h13v17H10z"/><path fill="#33c481" d="M23 0h11q2 0 2 2v7H23z"/><path fill="#107c41" d="M23 9h13v9H23z"/><path fill="#185c37" d="M10 17h13v7h13v8q0 2-2 2H10z"/><path fill="#107c41" d="M23 17h13v8H23z"/><path fill="#0e6f3a" d="M0 8h19v18H0z"/><path stroke="#fff" stroke-width="2.500" d="M6 12l7 10M13 12L6 22"/></svg></button>
    <button aria-label="Teams"><svg width="36" height="36"><circle cx="20" cy="7" r="6" fill="#7b83eb"/><path fill="#5059c9" d="M22 12h14v14q-3 8-11 5z"/><path fill="#7b83eb" d="M10 12h18v14q0 9-9 9-8 0-9-8z"/><path fill="#fff" d="M0 9h18v18H0z"/><path stroke="#5059c9" stroke-width="2.500" d="M4.500 13.500h9M9 13.500V23"/></svg><span class="bdg">1</span></button>
    <button aria-label="Photoshop"><span class="ps">Ps</span></button>
    <button class="dot red" aria-label="Opera"><svg width="36" height="36"><path fill="#e2182a" fill-rule="evenodd" d="M18 0a18 18 0 1 1 0 36 18 18 0 0 1 0-36zM18 5c-5 0-7.500 6-7.500 13S13 31 18 31s7.500-6 7.500-13S23 5 18 5z"/></svg></button>
    <button class="dot" aria-label="Figma"><svg width="36" height="36"><rect width="36" height="36" rx="4" fill="#282828"/><path fill="#f24e1e" d="M18 6h-4a4 4 0 0 0 0 8h4z"/><path fill="#ff7262" d="M18 6h4a4 4 0 0 1 0 8h-4z"/><path fill="#a259ff" d="M18 14h-4a4 4 0 0 0 0 8h4z"/><circle cx="22" cy="18" r="4" fill="#1abcfe"/><path fill="#0acf83" d="M18 22h-4a4 4 0 1 0 4 4z"/></svg></button>
    <button class="dot on" aria-label="Chrome"><svg width="36" height="36"><use href="#chrome"/></svg><span class="bdg tr"><svg width="24" height="24" fill="#b4002a"><use href="#person"/></svg></span></button>
    <button class="dot" aria-label="Chrome, second profile"><svg width="36" height="36"><use href="#chrome"/></svg><span class="bdg or"><svg width="24" height="24"><path fill="#e8691b" d="M14 4l5 3-6 6-1 6-6-1 3-6z"/></svg></span></button>
    <button class="dot" aria-label="Chrome, profile D"><svg width="36" height="36"><use href="#chrome"/></svg><span class="bdg">D</span></button>
    <button class="dot" aria-label="Edge"><svg width="36" height="36"><defs><linearGradient id="e1" x2="1"><stop stop-color="#1c9be0"/><stop offset=".6" stop-color="#2fc2d0"/><stop offset="1" stop-color="#62d84e"/></linearGradient><linearGradient id="e2" x2="0" y2="1"><stop stop-color="#1478c8"/><stop offset="1" stop-color="#0c4fa0"/></linearGradient></defs><circle cx="18" cy="18" r="18" fill="url(#e1)"/><path fill="url(#e2)" d="M0 18c1-8 14-10 17-3-5 2-4 13 6 14 5 .5 8-1 9-.5C28 34 23 36 18 36A18 18 0 0 1 0 18z"/><path fill="#d8eaf2" d="M17 15c-2 4 0 9 7 9 4 0 7-1 9-2l2 5c-3 3-8 3-12 2-9-1-11-11-6-14z"/></svg></button>
  </div>
  <div class="tray tbside d-flex align-items-center justify-content-end">
    <svg class="me-3" width="17" height="10"><path class="ln" stroke-width="2" d="M1.500 8.500l7-7 7 7"/></svg>
    <svg class="far" width="26" height="17"><path fill="#0f6cbd" d="M5 16a5 5 0 0 1 0-9 8 8 0 0 1 15-1z"/><path fill="#28a8ea" d="M5 16.500L19 6a5.500 5.500 0 0 1 2 10.500z"/></svg>
    <span class="lang far">ع</span>
    <svg width="26" height="20"><path class="ln" stroke-width="2" d="M2 7a15.500 15.500 0 0 1 22 0M5.500 11a10.500 10.500 0 0 1 15 0M9 14.500a5.500 5.500 0 0 1 8 0"/><circle cx="13" cy="17.500" r="2"/></svg>
    <svg width="24" height="20"><path class="ln" stroke-width="1.600" d="M1.500 7v6h4l5 4.500V2.500L5.500 7zM14 7q2 3 0 6M17 4.500q4 5.500 0 11"/><path class="ln" stroke-width="1.500" opacity=".35" d="M20 2.500q5 7.500 0 15"/></svg>
    <svg width="26" height="15"><rect class="ln" x="1" y="1" width="20" height="13" rx="3" stroke-width="2"/><path d="M4 4h6v7H4zM22.500 5h2.500v5h-2.500z"/></svg>
    <div class="clock">7:22 PM<br>1/29/2024</div>
    <svg width="24" height="26"><path fill="#1c1c1c" d="M2 19c2-2 2-4 2-8 0-4 3-7 7-7l7 0v9c0 3 1 5 2 6zM8 21h6l-3 4z"/><path fill="none" stroke="#dcebf2" stroke-width="1.600" d="M8 9h5l-5 7h5"/><path fill="none" stroke="#1c1c1c" stroke-width="1.800" d="M17 1h5l-5 6h5"/></svg>
  </div>
</div>
<script src="https://cdn.jsdelivr.net/npm/bootstrap@5.3.0/dist/js/bootstrap.bundle.min.js"></script>
</body>
</html>
